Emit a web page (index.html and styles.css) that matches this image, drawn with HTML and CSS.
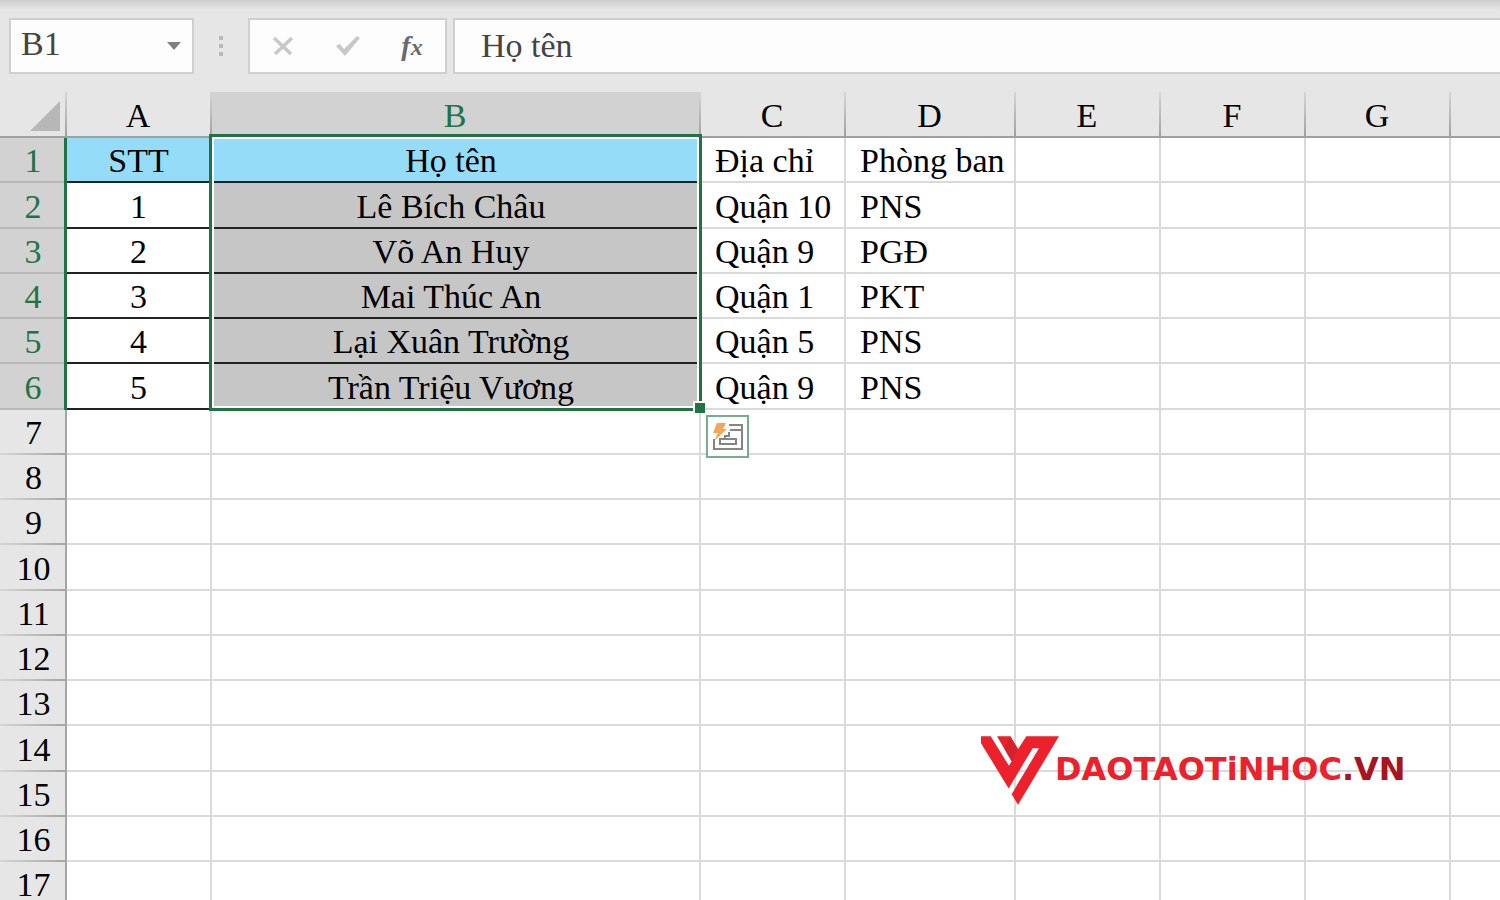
FILE: index.html
```
<!DOCTYPE html>
<html lang="vi">
<head>
    <meta charset="UTF-8">
    <title>Họ tên</title>
    <link rel="stylesheet" href="styles.css">
</head>
<body>
<div class="formula-bar">
    <div class="box name-box">
        <input class="cell-name" type="text" value="B1" aria-label="Name Box">
        <button class="drop" type="button" aria-label="Names">
            <svg width="14" height="8" viewBox="0 0 14 8"><path d="M0 0h14L7 8z" fill="#7d8083"/></svg>
        </button>
    </div>
    <div class="dots"><span></span><span></span><span></span></div>
    <div class="box actions">
        <button type="button" aria-label="Cancel">
            <svg width="22" height="20" viewBox="0 0 22 20"><path d="M2 2L19 18M20 2L3 18" stroke="#c8c8c8" stroke-width="3.5" fill="none"/></svg>
        </button>
        <button type="button" aria-label="Enter">
            <svg width="24" height="20" viewBox="0 0 24 20"><path d="M0 10L4 8L8 13L21 0L24 2L9 20z" fill="#c8c8c8"/></svg>
        </button>
        <button class="fx" type="button" aria-label="Insert Function">f<span>x</span></button>
    </div>
    <div class="box content-box">
        <input class="content" type="text" value="Họ tên" aria-label="Formula Bar">
    </div>
</div>

<div class="sheet">
    <table class="grid">
        <colgroup>
            <col class="c-num"><col class="c-std"><col class="c-name"><col class="c-std"><col class="c-dept">
            <col class="c-std"><col class="c-std"><col class="c-std"><col>
        </colgroup>
        <thead>
            <tr>
                <th class="corner"><svg width="30" height="30" viewBox="0 0 30 30"><path d="M30 0V30H0z" fill="#b7b7b7"/></svg></th>
                <th>A</th><th class="on">B</th><th>C</th><th>D</th><th>E</th><th>F</th><th>G</th><th></th>
            </tr>
        </thead>
        <tbody>
            <tr class="sel title"><th>1</th><td class="mid">STT</td><td class="mid name">Họ tên</td><td>Địa chỉ</td><td>Phòng ban</td><td></td><td></td><td></td><td></td></tr>
            <tr class="sel"><th>2</th><td class="mid">1</td><td class="mid name">Lê Bích Châu</td><td>Quận 10</td><td>PNS</td><td></td><td></td><td></td><td></td></tr>
            <tr class="sel"><th>3</th><td class="mid">2</td><td class="mid name">Võ An Huy</td><td>Quận 9</td><td>PGĐ</td><td></td><td></td><td></td><td></td></tr>
            <tr class="sel"><th>4</th><td class="mid">3</td><td class="mid name">Mai Thúc An</td><td>Quận 1</td><td>PKT</td><td></td><td></td><td></td><td></td></tr>
            <tr class="sel"><th>5</th><td class="mid">4</td><td class="mid name">Lại Xuân Trường</td><td>Quận 5</td><td>PNS</td><td></td><td></td><td></td><td></td></tr>
            <tr class="sel"><th>6</th><td class="mid">5</td><td class="mid name">Trần Triệu Vương</td><td>Quận 9</td><td>PNS</td><td></td><td></td><td></td><td></td></tr>
            <tr><th>7</th><td></td><td></td><td></td><td></td><td></td><td></td><td></td><td></td></tr>
            <tr><th>8</th><td></td><td></td><td></td><td></td><td></td><td></td><td></td><td></td></tr>
            <tr><th>9</th><td></td><td></td><td></td><td></td><td></td><td></td><td></td><td></td></tr>
            <tr><th>10</th><td></td><td></td><td></td><td></td><td></td><td></td><td></td><td></td></tr>
            <tr><th>11</th><td></td><td></td><td></td><td></td><td></td><td></td><td></td><td></td></tr>
            <tr><th>12</th><td></td><td></td><td></td><td></td><td></td><td></td><td></td><td></td></tr>
            <tr><th>13</th><td></td><td></td><td></td><td></td><td></td><td></td><td></td><td></td></tr>
            <tr><th>14</th><td></td><td></td><td></td><td></td><td></td><td></td><td></td><td></td></tr>
            <tr><th>15</th><td></td><td></td><td></td><td></td><td></td><td></td><td></td><td></td></tr>
            <tr><th>16</th><td></td><td></td><td></td><td></td><td></td><td></td><td></td><td></td></tr>
            <tr><th>17</th><td></td><td></td><td></td><td></td><td></td><td></td><td></td><td></td></tr>
        </tbody>
    </table>

    <!-- selected range B1:B6 -->
    <div class="range">
        <span class="handle"></span>
        <button class="flash" type="button" aria-label="Quick Analysis">
            <svg width="32" height="32" viewBox="0 0 32 32">
                <path d="M17 4H30V28H2V18M18 9H30M13 18H24V23H8V18H13V15H17V11" fill="none" stroke="#858585" stroke-width="2"/>
                <path d="M5 2H14L11 8H15L2 20L6 12H1z" fill="#f2a65a"/>
            </svg>
        </button>
    </div>

    <div class="brand">
        <svg class="mark" width="78" height="69" viewBox="63 49 234 206">
            <path d="M63 49H92L147 138L155 124L111 49H151L174 88L199 49H297L174 255L155 223L237 85H218L146 206L63 70z" fill="#ed212b"/>
            <path d="M151 49L174 88L155 124L133 86z" fill="#d2232a"/>
        </svg>
        <span class="brand-name">DAOTAOTiNHOC<span class="tld">.VN</span></span>
    </div>
</div>
</body>
</html>
```
FILE: styles.css
```
* { box-sizing:border-box;}
body { margin:0;height:100vh;overflow:hidden;background:#fff;color:#000;font-family:"Liberation Serif","Times New Roman",serif;font-size:34px;}
button { display:flex;align-items:center;justify-content:center;margin:0;padding:0;border:none;background:none;font-family:inherit;}
input { min-width:0;border:none;outline:none;padding:0;background:none;color:#444;font-family:inherit;font-size:34px;}

/* formula bar */
.formula-bar { display:flex;height:92px;padding:18px 0 18px 9px;background:linear-gradient(#cfcfcf,#e6e6e6 10px);}
.box { display:flex;align-items:center;border:2px solid #cfcfcf;background:#fdfdfd;}
.name-box { width:185px;padding:0 10px;}
.cell-name { flex:1;padding-bottom:4px;}
.drop { width:16px;height:30px;}
.dots { display:flex;flex-direction:column;align-items:center;justify-content:center;gap:4px;width:54px;}
.dots span { width:4px;height:4px;background:#b9b9b9;}
.actions { width:199px;justify-content:space-between;padding:0 20px;}
.actions button { width:26px;height:40px;}
.actions .fx { align-items:baseline;color:#6a6a6a;font-size:28px;line-height:40px;font-style:italic;font-weight:bold;}
.fx span { font-size:24px;}
.content-box { flex:1;margin-left:6px;border-right:none;padding-left:26px;}
.content { flex:1;}

/* grid */
.sheet { position:relative;}
.grid { width:100%;table-layout:fixed;border-collapse:separate;border-spacing:0;line-height:38px;}
.c-num { width:67px;}
.c-std { width:145px;}
.c-name { width:489px;}
.c-dept { width:170px;}
.grid th { padding:3px 0 0;font-weight:normal;text-align:center;background:#e6e6e6;}
.grid td { height:45px;padding:3px 0 0 14px;border-right:2px solid #dadada;border-bottom:2px solid #dadada;white-space:nowrap;}
.grid tr:nth-child(4n+2) td { height:46px;}
.grid thead th { height:46px;padding-right:3px;border-bottom:2px solid #a0a0a0;background:linear-gradient(#d6d6d6,#a0a0a0) right / 2px 100% no-repeat #e6e6e6;}
.grid thead .on { color:#217346;background-color:#d2d2d2;}
.grid thead .corner { padding:4px 7px 0 0;}
.corner svg { display:block;margin-left:auto;}
.grid tbody th { padding:1px 0 0 2px;border-right:2px solid #a6a6a6;background:linear-gradient(to right,#d6d6d6,#a6a6a6) bottom / 100% 2px no-repeat #e6e6e6;}
.grid .sel th { color:#217346;border-right:3px solid #217346;background:linear-gradient(#b8b8b8,#b8b8b8) bottom / 100% 2px no-repeat #d2d2d2;}
.grid .mid { padding-left:0;border-bottom-color:#222;text-align:center;}
.grid .name { padding-right:9px;background:#c6c6c6;}
.grid .title .mid { background:#94dcf8;}
.grid th:last-child { background-image:none;}
.grid td:last-child { border-right:none;}

/* selection */
.range { position:absolute;top:42px;left:209px;width:493px;height:277px;border:3px solid #217346;box-shadow:inset 0 0 0 2px #fff;}
.handle { position:absolute;right:-6px;bottom:-5px;width:12px;height:12px;border:solid #fff;border-width:2px 0 0 2px;background:#217346;}
.flash { position:absolute;top:278px;left:494px;width:43px;height:43px;border:2px solid #77ad8e;background:#fff;}

/* logo */
.brand { position:absolute;top:644px;right:90px;display:flex;align-items:center;width:429px;height:69px;}
.mark { flex:none;margin-right:-4px;}
.brand-name { padding-bottom:3px;color:#ed212b;font:bold 32px/32px "DejaVu Sans",sans-serif;}
.tld { color:#a81420;}
```
